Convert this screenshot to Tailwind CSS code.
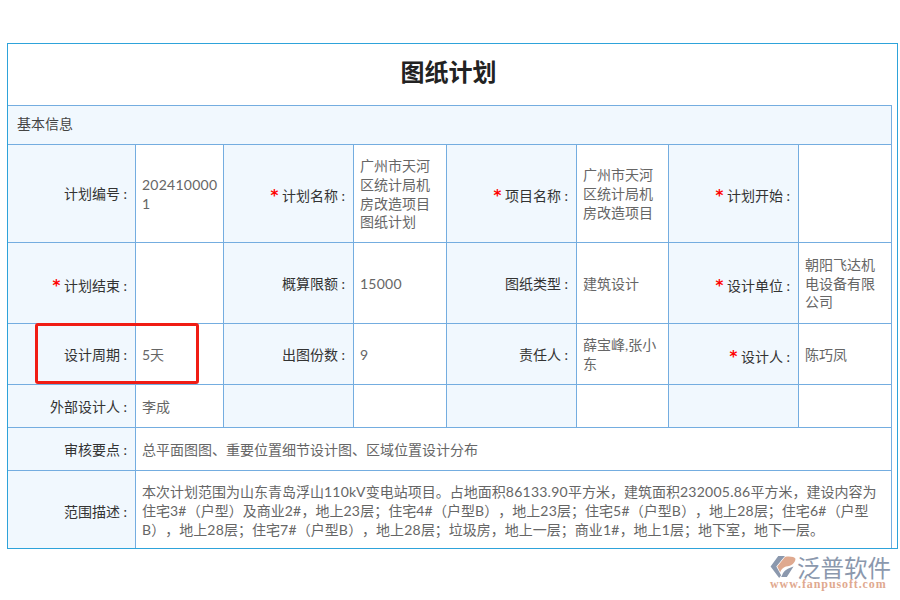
<!DOCTYPE html>
<html lang="zh-CN">
<head>
    <meta charset="UTF-8">
    <title>图纸计划</title>
    <script src="https://cdn.jsdelivr.net/npm/@tailwindcss/browser@4"></script>
</head>
<body class="bg-white font-['Lato','Noto_Sans_CJK_SC',sans-serif] text-[14px] leading-[18.67px] [text-spacing-trim:space-all]">
    <div class="relative w-[900px] h-[600px] overflow-hidden pt-[43px] pl-[7px]">
        <div class="w-[891px] h-[506px] border border-[#2ea3da]">
            <table class="table-fixed w-[884px] border-separate border-spacing-0 text-[#666]
                [&_th]:bg-[#f1f8fe] [&_th]:font-normal [&_th]:text-right [&_th]:text-[#333] [&_th]:pr-[8px] [&_th]:pt-[2px]
                [&_th]:border-r [&_th]:border-b [&_th]:border-[#74ade0]
                [&_td]:pl-[6px] [&_td]:pr-[6px] [&_td]:pt-[2px] [&_td]:break-all [&_td]:border-r [&_td]:border-b [&_td]:border-[#74ade0]
                [&_span]:tracking-[0.25px]
                [&_b]:font-['DejaVu_Sans',sans-serif] [&_b]:text-[15px] [&_b]:leading-none [&_b]:text-[#f00]">
                <colgroup>
                    <col class="w-[128px]"><col class="w-[88px]"><col class="w-[130px]"><col class="w-[93px]">
                    <col class="w-[130px]"><col class="w-[92px]"><col class="w-[130px]"><col class="w-[93px]">
                </colgroup>
                <tr class="h-[62px]">
                    <td colspan="8" class="text-center text-[24px] font-bold text-[#222] !border-r-0 !pb-[7px] !pr-[9px]">图纸计划</td>
                </tr>
                <tr class="h-[39px]">
                    <th colspan="8" class="!text-left !pl-[9px] text-[14px] !text-[#444] pb-[3px]">基本信息</th>
                </tr>
                <tr class="h-[98px]">
                    <th>计划编号&thinsp;&thinsp;:</th>
                    <td class="whitespace-nowrap !break-normal"><span>202410000</span><br>1</td>
                    <th class="!pt-[6px]"><b>*</b> 计划名称&thinsp;&thinsp;:</th>
                    <td>广州市天河区统计局机房改造项目图纸计划</td>
                    <th class="!pt-[6px]"><b>*</b> 项目名称&thinsp;&thinsp;:</th>
                    <td>广州市天河区统计局机房改造项目</td>
                    <th class="!pt-[6px]"><b>*</b> 计划开始&thinsp;&thinsp;:</th>
                    <td></td>
                </tr>
                <tr class="h-[81px]">
                    <th class="!pt-[6px]"><b>*</b> 计划结束&thinsp;&thinsp;:</th>
                    <td></td>
                    <th>概算限额&thinsp;&thinsp;:</th>
                    <td><span>15000</span></td>
                    <th>图纸类型&thinsp;&thinsp;:</th>
                    <td>建筑设计</td>
                    <th class="!pt-[6px]"><b>*</b> 设计单位&thinsp;&thinsp;:</th>
                    <td>朝阳飞达机电设备有限公司</td>
                </tr>
                <tr class="h-[61px]">
                    <th>设计周期&thinsp;&thinsp;:</th>
                    <td>5天</td>
                    <th>出图份数&thinsp;&thinsp;:</th>
                    <td>9</td>
                    <th>责任人&thinsp;&thinsp;:</th>
                    <td>薛宝峰,张小东</td>
                    <th class="!pt-[6px]"><b>*</b> 设计人&thinsp;&thinsp;:</th>
                    <td>陈巧凤</td>
                </tr>
                <tr class="h-[43px]">
                    <th>外部设计人&thinsp;&thinsp;:</th>
                    <td>李成</td>
                    <th></th><td></td>
                    <th></th><td></td>
                    <th></th><td></td>
                </tr>
                <tr class="h-[43px]">
                    <th>审核要点&thinsp;&thinsp;:</th>
                    <td colspan="7">总平面图图、重要位置细节设计图、区域位置设计分布</td>
                </tr>
                <tr class="h-[77px]">
                    <th class="!border-b-0 !pt-[5px]">范围描述&thinsp;&thinsp;:</th>
                    <td colspan="7" class="!border-b-0 !pt-[4px] whitespace-nowrap">本次计划范围为山东青岛浮山<span>110kV</span>变电站项目。占地面积<span>86133.90</span>平方米&#xFF0C;建筑面积<span>232005.86</span>平方米&#xFF0C;建设内容为<br>住宅<span>3#</span>&#xFF08;户型&#xFF09;及商业<span>2#</span>&#xFF0C;地上<span>23</span>层&#xFF1B;住宅<span>4#</span>&#xFF08;户型<span>B</span>&#xFF09;&#xFF0C;地上<span>23</span>层&#xFF1B;住宅<span>5#</span>&#xFF08;户型<span>B</span>&#xFF09;&#xFF0C;地上<span>28</span>层&#xFF1B;住宅<span>6#</span>&#xFF08;户型<br><span>B</span>&#xFF09;&#xFF0C;地上<span>28</span>层&#xFF1B;住宅<span>7#</span>&#xFF08;户型<span>B</span>&#xFF09;&#xFF0C;地上<span>28</span>层&#xFF1B;垃圾房&#xFF0C;地上一层&#xFF1B;商业<span>1#</span>&#xFF0C;地上<span>1</span>层&#xFF1B;地下室&#xFF0C;地下一层。</td>
                </tr>
            </table>
        </div>

        <!-- red highlight over the design period row -->
        <div class="absolute left-[35px] top-[323px] w-[164px] h-[61px] border-[3px] border-[#f01c14] rounded-[3px]"></div>

        <!-- logo -->
        <div class="absolute left-[770px] top-[556px] w-[122px] flex flex-col">
            <div class="flex items-center h-[22px]">
                <svg class="w-[27px] h-[22px] shrink-0" viewBox="0 0 27 23">
                    <path d="M8 0H15L6 11L11 20L9 23L0 11Z" fill="#8b98ad"/>
                    <path d="M15 1C20 0 25 1 26 3C26 7 22 11 16 11C13 12 11 14 10 17L7 11Z" fill="#dfa98f"/>
                    <path d="M12 20C14 15 18 13 24 11L17 22H11Z" fill="#8b98ad"/>
                </svg>
                <span class="font-['Noto_Sans_CJK_SC',sans-serif] text-[23.5px] leading-[22px] text-[#8b98ad] whitespace-nowrap">泛普软件</span>
            </div>
            <span class="font-['Liberation_Serif',serif] font-bold text-[12px] leading-[12px] tracking-[0.9px] text-[#dfa98f] whitespace-nowrap">www.fanpusoft.com</span>
        </div>
    </div>
</body>
</html>
